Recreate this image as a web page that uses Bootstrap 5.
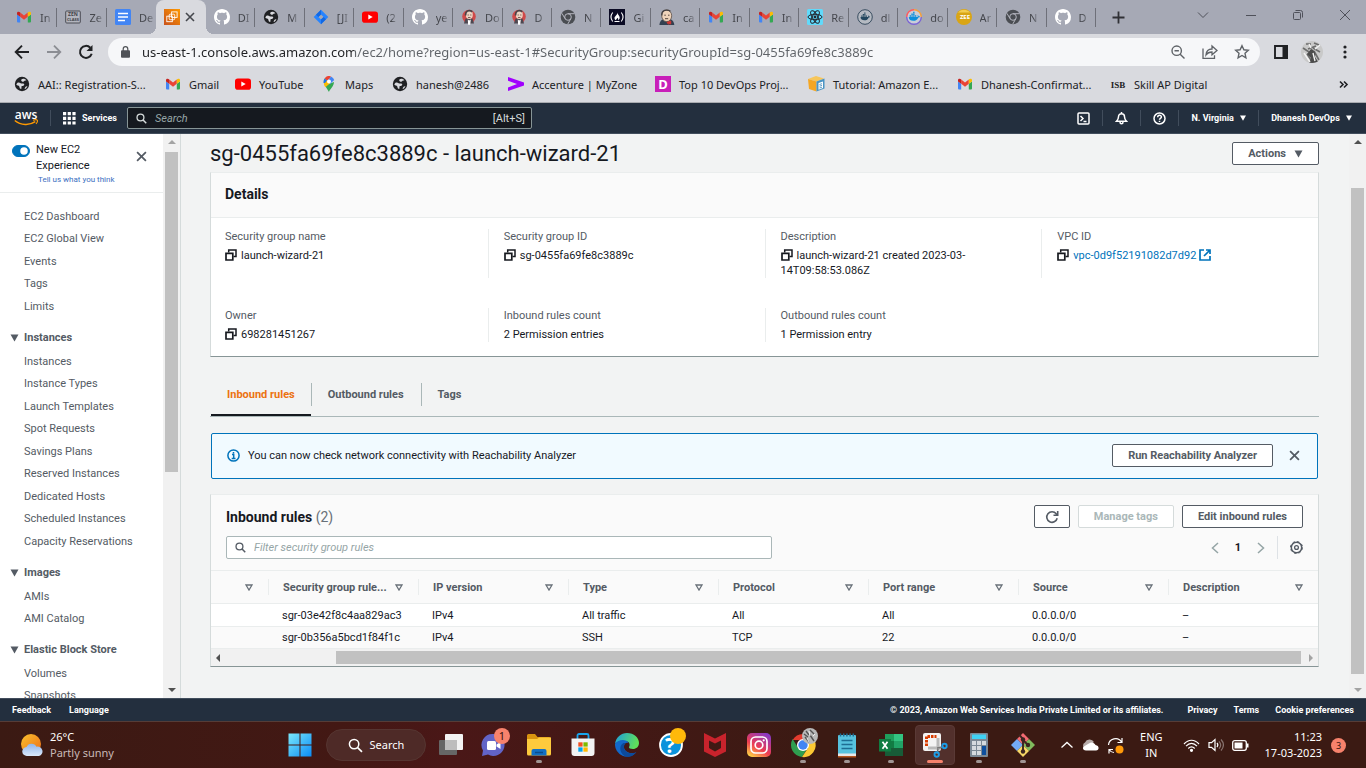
<!DOCTYPE html>
<html lang="en">
<head>
<meta charset="utf-8">
<meta name="viewport" content="width=device-width, initial-scale=1">
<title>Security group - EC2 Management Console</title>
<link href="https://cdn.jsdelivr.net/npm/bootstrap@5.3.0/dist/css/bootstrap.min.css" rel="stylesheet">
<style>
:root{--ui:"Noto Sans","Open Sans",sans-serif;--ember:Roboto,"Noto Sans",sans-serif;--ink:#16191f;--grey:#545b64;--line:#eaeded;--edge:#aab7b8;--navy:#232f3e}
html,body{height:100%}
body{font-family:var(--ember);font-size:11px;line-height:15px;color:var(--ink);background:#f2f3f3;overflow:hidden}
svg{display:block;flex:none}
button{font-family:inherit}
a{text-decoration:none;color:inherit}
.plain{border:0;background:none;padding:0;color:inherit}
.workarea{min-height:0}

/* browser window */
.browser{font-family:var(--ui);background:#d9dadf;color:#202124}
.tabstrip{height:34px;background:#a6a9b5;padding-left:8px}
.tabset{flex:0 1 1088px;min-width:0}
.wtab{flex:1 1 0;min-width:0;height:34px;padding:0 0 0 8px;gap:8px;position:relative;color:#45474d;font-size:11px}
.wtab span{white-space:nowrap;-webkit-mask-image:linear-gradient(90deg,#000 55%,rgba(0,0,0,.3))}
.wtab::after{content:"";position:absolute;right:0;top:8px;height:19px;width:1px;background:#6e7079}
.wtab.on{background:#d9dadf;border-radius:8px 8px 0 0;gap:5px}
.wtab.on::after,.wtab.before-on::after{display:none}
.wtab.on::before{content:"";position:absolute;left:-8px;right:-8px;bottom:0;height:8px;background:radial-gradient(circle at 0 0,transparent 8px,#d9dadf 8px) left/8px 8px no-repeat,radial-gradient(circle at 100% 0,transparent 8px,#d9dadf 8px) right/8px 8px no-repeat}
.wctl{gap:29px;padding-right:16px;padding-bottom:5px;color:#4f515a}
.toolbar{height:36px;padding:0 14px}
.omni{height:28px;border-radius:14px;background:#f6f7f9;padding:0 10px 0 13px;margin:0 14px;color:#5f6368}
.side-panel{margin-right:13px}
.omni input{font-family:var(--ui);font-size:13px;border:0;outline:0;min-width:0;padding:0;background:linear-gradient(90deg,#202124 216px,#5f6368 216px);-webkit-background-clip:text;background-clip:text;-webkit-text-fill-color:transparent}
.marks{height:33px;padding:0 14px 4px;font-size:11px;border-bottom:1px solid #a9abb0;margin:0}
.marks ul{display:grid;grid-template-columns:151px 70px 86px 71px 116px 147px 153px 149px 153px auto;margin:0;padding:0;list-style:none;white-space:nowrap}
.marks a{display:flex;align-items:center;gap:8px}

/* console header and footer */
.aws-top{height:31px;background:var(--navy);color:#fff;font-size:9px;font-weight:700;border-bottom:1px solid #414d5c;padding:0 14px}
.aws-top .rule{width:1px;height:16px;background:#414d5c}
.aws-top .services{gap:6px;margin:0 10px 0 12px}
.aws-search{flex:0 1 405px;height:22px;background:#15191f;border:1px solid #879596;border-radius:2px;padding:0 6px 0 8px;font-weight:400;font-size:11px;color:#d5dbdb}
.aws-search input{background:none;border:0;outline:0;color:#fff;font-size:11px;font-style:italic;min-width:0;padding:0}
.aws-search input::placeholder{color:#95a5a6;opacity:1}
.aws-foot{height:23px;background:var(--navy);border-top:1px solid #414d5c;color:#fff;font-size:9px;font-weight:700;padding:0 12px}
.aws-foot .language{margin-left:18px}

/* side navigation */
.side{flex:0 0 163px;background:#fff;overflow:hidden;color:var(--grey)}
.side-head{height:59px;border-bottom:1px solid var(--line);padding:8px 16px 0 12px;line-height:16px;color:var(--ink)}
.side-head .form-check-input{width:18px;height:12px;margin:3px 6px 0 0;float:none;background-color:#0073bb;border-color:#0073bb;flex:none;box-shadow:none}
.side-head a{font-size:8px;line-height:12px;color:#3d6fbf;padding-left:2px}
.side-head button{margin-top:9px;color:var(--grey)}
.side nav{padding-top:12px}
.side ul{list-style:none;margin:0;padding:0 0 0 24px}
.side li{height:22px;line-height:22px;white-space:nowrap}
.side li:nth-child(odd){height:23px;line-height:23px}
.side h3{font-size:11px;line-height:16px;font-weight:700;margin:12px 0 4px;padding-left:10px;gap:5px;display:flex;align-items:center}

/* drawn scroll bars */
.vbar{flex:0 0 17px;background:#f1f1f1;padding:6px 2px;align-items:center}
.vbar i,.hbar i{background:#c1c1c1}
.side-thumb{height:58%}
.page-thumb{height:88%;margin-top:44px}
.hbar{height:17px;background:#f1f1f1;padding:0 5px}
.hbar i{width:88%;height:13px}
.up,.down{width:0;height:0;border:4px solid transparent;border-top:0;border-bottom:4px solid #505050}
.down{border-bottom:0;border-top:4px solid #505050}
.lt,.rt{width:0;height:0;border:4px solid transparent;border-left:0;border-right:4px solid #505050}
.rt{border-right:0;border-left:4px solid #a3a3a3}
.dim.up{border-bottom-color:#a3a3a3}.dim.down{border-top-color:#a3a3a3}

/* main pane */
.pane{border-left:1px solid #d5dbdb;padding:8px 30px 0 29px;min-width:0;overflow:hidden}
.page-head{margin-bottom:7px}
.page-title{font-size:22px;line-height:23px;font-weight:400;margin:0}
.abtn{height:23px;border:1px solid #545b64;border-radius:2px;background:#fff;color:var(--grey);font-size:11px;line-height:15px;font-weight:700;padding:0 15px;display:inline-flex;align-items:center;justify-content:center}
.abtn:disabled{opacity:1;color:#aab7b8;border-color:#d5dbdb;background:#fff}
.abtn.square{width:36px;padding:0}
.panel{background:#fff;border:1px solid #d5dbdb;border-top-color:var(--line);border-bottom-color:#879596}
.panel-top{background:#fafafa;border-bottom:1px solid var(--line)}
.panel-top.title-only{height:45px;padding:0 14px 2px}
.panel-top.tools{padding:10px 15px 11px}
.panel h2{font-size:14px;line-height:18px;font-weight:700;margin:0}
.panel h2 span{color:#687078}
.facts{padding:11px 0 14px}
.facts dl + dl{margin-top:30px}
.kv{padding:0 15px 0 14px;color:var(--ink)}
.kv + .kv{border-left:1px solid var(--line);padding-left:15px}
.kv dt{font-weight:400;color:var(--grey);margin-bottom:4px}
.kv dd{margin:0}
.kv svg{display:inline-block;vertical-align:-2px;margin-right:4px}
.vpc{color:#0073bb}
.rtabs{height:44px;margin-top:16px;border-bottom:1px solid var(--edge);padding-left:1px}
.rtabs button{height:43px;font-weight:700;color:var(--grey);padding:0 16px;position:relative}
.rtabs button + button{padding:0 17px}
.rtabs button + button::before{content:"";position:absolute;left:0;top:10px;height:23px;width:1px;background:var(--edge)}
.rtabs .on{color:#ec7211;border-bottom:2px solid var(--ink);padding-top:2px}
.notice{height:46px;margin:16px 1px 15px;border:1px solid #0073bb;border-radius:2px;background:#f1faff;padding:0 17px 2px 15px}
.notice .plain{color:var(--grey)}
.filter{flex:0 1 546px;height:23px;background:#fff;border:1px solid var(--edge);border-radius:2px;padding:0 8px;color:var(--grey)}
.filter input{border:0;outline:0;padding:0;font-size:11px;font-style:italic;background:none;min-width:0}
.filter input::placeholder{color:#95a5a6;opacity:1}
.prefs{height:23px;padding-left:12px}
.rules{width:100%;table-layout:fixed;margin:0;border-collapse:separate;border-spacing:0}
.rules th{height:33px;background:#fafafa;border-bottom:1px solid var(--line);padding:0 15px 0 0;color:var(--grey);font-weight:700}
.rules th > div{height:16px;padding-left:14px;border-left:1px solid var(--line)}
.rules th:first-child > div{border:0}
.rules th:first-child{width:57px}
.rules td{height:23px;padding:0 0 0 14px;border-bottom:1px solid var(--line)}
.rules tr:last-child td{height:22px;background:#fafafa}

/* desktop task bar */
.taskbar{height:47px;font-family:var(--ui);background:linear-gradient(90deg,#3b1a13,#431814 25%,#4a1717 33%,#3b1a13 60%,#3b1a13);color:#fff;font-size:11px;line-height:16px;border-top:1px solid #563c37}
.weather{flex:0 0 278px;padding-left:20px;gap:7px}
.weather span{color:#c9bab7}
.tbi{width:44px;height:46px;display:flex;align-items:center;justify-content:center;position:relative}
.tbi.run::after{content:"";position:absolute;bottom:5px;left:19px;width:6px;height:3px;border-radius:2px;background:#a09593}
.tbi.cur::before{content:"";position:absolute;inset:3px 2px;border:1px solid #5a3a36;border-radius:4px;background:#52302c}
.tbi.cur svg{position:relative}
.tbi.cur::after{left:14px;width:16px;background:#f7826c}
.pill{width:100px;height:32px;border-radius:16px;background:#4e2a27;border:1px solid #563531;gap:7px;font-size:11px;margin:0 3px 0 4px}
.tray{padding-right:20px}
.clock{margin-right:9px}
.num3{width:15px;height:15px;border-radius:8px;background:#f7826c;color:#33110c;font-size:9px;line-height:15px;text-align:center}
</style>
</head>
<body class="d-flex flex-column">

<svg width="0" height="0" class="position-absolute" aria-hidden="true">
  <symbol id="gmail" viewBox="0 0 16 16"><path fill="#4285f4" d="M2 13.500h2.200V7.800L1 5.400v7.100a1 1 0 0 0 1 1z"/><path fill="#34a853" d="M11.800 13.500H14a1 1 0 0 0 1-1V5.400l-3.200 2.400z"/><path fill="#ea4335" d="M4.200 7.800V3.600L8 6.500l3.800-2.900v4.200L8 10.700z"/><path fill="#c5221f" d="M1 4.200v1.200l3.200 2.400V3.600l-.7-.5A1.500 1.500 0 0 0 1 4.200z"/><path fill="#fbbc04" d="M11.800 3.600v4.200L15 5.400V4.200a1.500 1.500 0 0 0-2.500-1.100z"/></symbol>
  <symbol id="github" viewBox="0 0 16 16"><path fill="#fff" d="M8 0C3.580 0 0 3.580 0 8c0 3.540 2.290 6.530 5.470 7.590.4.070.55-.17.55-.38 0-.19-.01-.82-.01-1.490-2.010.37-2.530-.49-2.690-.94-.09-.23-.48-.94-.82-1.130-.28-.15-.68-.52-.01-.53.63-.01 1.080.58 1.230.82.72 1.210 1.870.87 2.330.66.070-.52.28-.87.51-1.070-1.780-.2-3.640-.89-3.640-3.950 0-.87.31-1.590.82-2.150-.08-.2-.36-1.020.08-2.120 0 0 .67-.21 2.200.82.64-.18 1.320-.27 2-.27s1.360.09 2 .27c1.530-1.040 2.200-.82 2.200-.82.44 1.100.16 1.920.08 2.120.51.56.82 1.270.82 2.150 0 3.070-1.870 3.750-3.650 3.950.29.25.54.73.54 1.480 0 1.070-.01 1.930-.01 2.200 0 .21.15.46.55.38A8.010 8.010 0 0 0 16 8c0-4.420-3.580-8-8-8z"/></symbol>
  <symbol id="globe" viewBox="0 0 16 16"><circle cx="8" cy="8" r="7.200" fill="#202124"/><path fill="#d9dadf" d="M2.300 8.600C3 5.800 5.500 6.200 6.600 7.200c.8.700 2.400.2 3.100.5.900.400.7 1.700-.3 2-.9.300-1.900.2-2 1.100-.1 1 .6 1.600-.4 2.200-1.700-.4-1.300-2-1.700-2.600-.6-1-2.100-.6-3-1.800zM7.200 3.700C8.400 2.200 11 2.600 12.400 4.200c-.8.500-1.700 0-2.100.8-.3.700-1 1-1.800.7-.6-.3-1.600-1.100-1.300-2zM11.200 11.200c.5-.8 1.400-.9 2.200-.8-.5 1.200-1.500 2.200-2.700 2.700-.2-.7.100-1.300.5-1.900z"/></symbol>
  <symbol id="youtube" viewBox="0 0 16 16"><rect y="2.500" width="16" height="11.200" rx="2.800" fill="#f00"/><path fill="#fff" d="M6.300 5.600v4.900L10.700 8z"/></symbol>
  <symbol id="chromegrey" viewBox="0 0 16 16"><circle cx="8" cy="8" r="7.300" fill="#4a4d52"/><circle cx="8" cy="8" r="3.300" fill="none" stroke="#b4b6bf" stroke-width="1"/><path stroke="#b4b6bf" fill="none" d="M8 4.700h6.500M5.100 9.700 1.900 4.300M10.800 9.700l-3.100 5.500"/></symbol>
  <symbol id="jenkins" viewBox="0 0 16 16"><circle cx="8" cy="7.500" r="6.800" fill="#cf4a4a"/><path d="M4.500 9.500 3 14.500h10l-1.500-5z" fill="#4d4750"/><ellipse cx="8.300" cy="5.700" rx="3.500" ry="4.400" fill="#ecd3c2"/><path d="M4.700 6.500C4 2.200 8 .3 11.300 2.800" stroke="#4a4146" stroke-width="1.700" fill="none"/><path d="M6.600 6h1.200M9.200 6h1.200M7 8.500h2.500" stroke="#6d5049" stroke-width=".9"/><path d="m6.800 10.500 1.300 1 1.700-1-.6 5.300H7.100z" fill="#fff"/></symbol>
  <symbol id="whale" viewBox="0 0 16 16"><path d="M2 8h10.200c.3-.8.100-1.600-.4-2.200.9.200 1.500.8 1.700 1.500.5-.1 1 0 1.400.3-.4.700-1.100 1-2 .9-1 2.700-2.900 3.900-5.700 3.900C4.200 12.400 2.100 11 2 8zM3 6h1.600v1.600H3zM5 6h1.600v1.600H5zM7 6h1.600v1.600H7zM9 6h1.600v1.600H9zM5 4h1.600v1.600H5zM7 4h1.600v1.600H7zM7 2.100h1.600v1.600H7z"/></symbol>
  <symbol id="glass" viewBox="0 0 16 16"><circle cx="6.500" cy="6.500" r="5" fill="none" stroke="currentColor" stroke-width="1.900"/><path d="m10.300 10.300 4.600 4.600" stroke="currentColor" stroke-width="2.200"/></symbol>
  <symbol id="copy" viewBox="0 0 12 12"><path d="M3.700 3.500v-2.500h7.300v6.500H8.500" fill="none" stroke="#16191f" stroke-width="1.500"/><path d="M1 4.300h6.800v6.700H1z" fill="#fff" stroke="#16191f" stroke-width="1.700"/></symbol>
  <symbol id="tri" viewBox="0 0 8 8"><path d="M0 .5h8L4 7.500z" fill="currentColor"/></symbol>
  <symbol id="sort" viewBox="0 0 8 7"><path d="M1 1h6L4 6z" fill="none" stroke="#687078" stroke-width="1.300"/></symbol>
  <symbol id="cross" viewBox="0 0 10 10"><path d="m1 1 8 8M9 1 1 9" stroke="currentColor" stroke-width="1.600"/></symbol>
</svg>

<header class="browser flex-shrink-0">
  <div class="tabstrip d-flex">
    <div class="tabset d-flex">
      <div class="wtab d-flex align-items-center"><svg width="16" height="16"><use href="#gmail"/></svg><span>In</span></div>
      <div class="wtab d-flex align-items-center"><svg width="16" height="16" viewBox="0 0 16 16"><rect x=".7" y="2" width="14.600" height="12" rx="1" fill="#b3b5be" stroke="#4b4d55"/><text x="8" y="7.300" font-size="5" font-weight="700" text-anchor="middle" fill="#3f4148">ZEN</text><text x="8" y="12" font-size="4" font-weight="700" text-anchor="middle" fill="#3f4148">CLASS</text></svg><span>Ze</span></div>
      <div class="wtab before-on d-flex align-items-center"><svg width="16" height="16" viewBox="0 0 16 16"><rect width="16" height="16" rx="1.500" fill="#4285f4"/><path d="M3 4.500h10M3 8h10M3 11.500h7" stroke="#fff" stroke-width="1.600"/></svg><span>De</span></div>
      <div class="wtab on d-flex align-items-center"><svg width="16" height="16" viewBox="0 0 16 16"><defs><linearGradient id="ec" x1="0" y1="1" x2="1" y2="0"><stop stop-color="#c8511b"/><stop offset="1" stop-color="#f90"/></linearGradient></defs><rect width="16" height="16" fill="url(#ec)"/><g fill="none" stroke="#fff" stroke-width=".9"><rect x="2.800" y="7.200" width="5.500" height="5.500"/><rect x="5.200" y="5.200" width="5.500" height="5.500" rx="1"/><rect x="7.600" y="2.900" width="5.500" height="5.500"/></g></svg><button class="plain" aria-label="Close tab"><svg width="10" height="10"><use href="#cross"/></svg></button></div>
      <div class="wtab d-flex align-items-center"><svg width="16" height="16"><use href="#github"/></svg><span>DI</span></div>
      <div class="wtab d-flex align-items-center"><svg width="16" height="16"><use href="#globe"/></svg><span>M</span></div>
      <div class="wtab d-flex align-items-center"><svg width="16" height="16" viewBox="0 0 16 16"><path d="m8 .7 7.300 7.300L8 15.300.7 8z" fill="#2684ff"/><path d="m8 5.400 2.600 2.600L8 10.600 5.400 8z" fill="#a6a9b5"/><path d="M8 .7v4.700L5.400 8 3 5.700zM8 15.300v-4.700L10.600 8l2.400 2.300z" fill="#1268e3"/></svg><span>[JI</span></div>
      <div class="wtab d-flex align-items-center"><svg width="16" height="16"><use href="#youtube"/></svg><span>(2</span></div>
      <div class="wtab d-flex align-items-center"><svg width="16" height="16"><use href="#github"/></svg><span>ye</span></div>
      <div class="wtab d-flex align-items-center"><svg width="16" height="16"><use href="#jenkins"/></svg><span>Do</span></div>
      <div class="wtab d-flex align-items-center"><svg width="16" height="16"><use href="#jenkins"/></svg><span>D</span></div>
      <div class="wtab d-flex align-items-center"><svg width="16" height="16"><use href="#chromegrey"/></svg><span>N</span></div>
      <div class="wtab d-flex align-items-center"><svg width="16" height="16" viewBox="0 0 16 16"><rect width="16" height="16" fill="#0a0a23"/><g fill="none" stroke="#fff" stroke-width="1.100"><path d="M3.700 3.500c-2 2.600-2 6.400 0 9M12.300 3.500c2 2.600 2 6.400 0 9M5.500 12.500h5"/></g><path fill="#fff" d="M8.300 3.400c.4 2.500 3 3.500 2.300 6-.2.900-.9 1.500-1.600 1.800.5-1 .1-1.800-.5-2.400-.5 1-1.600 1.200-1.300 2.400-1-.4-1.700-1.200-1.700-2.300C5.500 7 8.500 6.200 8.300 3.400z"/></svg><span>Gi</span></div>
      <div class="wtab d-flex align-items-center"><svg width="16" height="16" viewBox="0 0 16 16"><path d="M4 10.500c-2 .5-3.300 2-3.600 5.500h14.900c-.2-2.500-1.300-4.500-3-5.500z" fill="#334050"/><ellipse cx="7.700" cy="6.800" rx="5" ry="5.800" fill="#efd3ba" stroke="#5d5148" stroke-width=".8"/><path d="M2.900 6.500C2 1 8 0 11.500 2.200" stroke="#454041" stroke-width="1.300" fill="none"/><path d="m8 13.500 3.700-1.500v3zM8 13.500l2 2.200" fill="#d33833" stroke="#d33833" stroke-width="1"/><path d="M5.300 6.200h1.500M9 6.200h1.500M6 9.700h3.200" stroke="#453630" stroke-width=".9"/></svg><span>ca</span></div>
      <div class="wtab d-flex align-items-center"><svg width="16" height="16"><use href="#gmail"/></svg><span>In</span></div>
      <div class="wtab d-flex align-items-center"><svg width="16" height="16"><use href="#gmail"/></svg><span>In</span></div>
      <div class="wtab d-flex align-items-center"><svg width="16" height="16" viewBox="0 0 16 16"><rect width="16" height="16" rx="1.500" fill="#61dafb"/><g fill="none" stroke="#23272f"><ellipse cx="8" cy="8" rx="7" ry="2.700"/><ellipse cx="8" cy="8" rx="7" ry="2.700" transform="rotate(60 8 8)"/><ellipse cx="8" cy="8" rx="7" ry="2.700" transform="rotate(120 8 8)"/></g><circle cx="8" cy="8" r="1.400" fill="#23272f"/></svg><span>Re</span></div>
      <div class="wtab d-flex align-items-center"><svg width="16" height="16" viewBox="0 0 16 16"><circle cx="8" cy="8" r="7.300" fill="#b5bac2" stroke="#394d60"/><use href="#whale" x="2" y="2" width="12" height="12" fill="#23475f"/></svg><span>dl</span></div>
      <div class="wtab d-flex align-items-center"><svg width="16" height="16" viewBox="0 0 16 16"><circle cx="8" cy="8" r="7.300" fill="#c9ced8"/><path d="M8 .7A7.300 7.300 0 0 0 .7 8" stroke="#ff5a5f" stroke-width="1.400" fill="none"/><path d="M8 .7A7.300 7.300 0 0 1 15.300 8" stroke="#f5a03c" stroke-width="1.400" fill="none"/><path d="M.7 8a7.300 7.300 0 0 0 14.600 0" stroke="#7a63d4" stroke-width="1.400" fill="none"/><use href="#whale" x="1" y="1" width="14" height="14" fill="#0b8fdc"/></svg><span>do</span></div>
      <div class="wtab d-flex align-items-center"><svg width="16" height="16" viewBox="0 0 16 16"><circle cx="8" cy="8" r="8" fill="#d9a514"/><path d="M2 3.500c4-4 9-3 12 0" fill="#f2cd51"/><text x="9" y="10.300" font-size="6" font-weight="700" text-anchor="middle" fill="#fff">ZEE</text></svg><span>Ar</span></div>
      <div class="wtab d-flex align-items-center"><svg width="16" height="16"><use href="#chromegrey"/></svg><span>N</span></div>
      <div class="wtab d-flex align-items-center"><svg width="16" height="16"><use href="#github"/></svg><span>D</span></div>
    </div>
    <button class="plain px-3" aria-label="New tab"><svg width="13" height="13" viewBox="0 0 13 13"><path d="M6.500.5v12M.5 6.500h12" stroke="#303136" stroke-width="1.800"/></svg></button>
    <div class="wctl d-flex align-items-center ms-auto">
      <button class="plain px-1" aria-label="Search tabs"><svg width="12" height="12" viewBox="0 0 12 12" fill="none" stroke="currentColor"><path d="m1 3.500 5 5 5-5"/></svg></button>
      <button class="plain px-1" aria-label="Minimise"><svg width="10" height="10" viewBox="0 0 10 10"><path d="M0 5.500h10" stroke="currentColor"/></svg></button>
      <button class="plain px-1" aria-label="Restore"><svg width="10" height="10" viewBox="0 0 10 10" fill="none" stroke="currentColor"><rect x=".5" y="2.500" width="7" height="7" rx="1"/><path d="M2.500.5h5a2 2 0 0 1 2 2v5"/></svg></button>
      <button class="plain ps-1" aria-label="Close window"><svg width="10" height="10" viewBox="0 0 10 10"><path d="m0 0 10 10M10 0 0 10" stroke="currentColor"/></svg></button>
    </div>
  </div>
  <div class="toolbar d-flex align-items-center">
    <button class="plain me-3" aria-label="Back"><svg width="16" height="16" viewBox="0 0 16 16" fill="none" stroke="#202124" stroke-width="1.900"><path d="M15 8H2.500M8 1.700 1.700 8 8 14.300"/></svg></button>
    <button class="plain me-3" aria-label="Forward"><svg width="16" height="16" viewBox="0 0 16 16" fill="none" stroke="#8b8d93" stroke-width="1.800"><path d="M1 8h12.500M8 1.700 14.300 8 8 14.300"/></svg></button>
    <button class="plain" aria-label="Reload"><svg width="16" height="16" viewBox="0 0 16 16"><path d="M13.700 9.700A6 6 0 1 1 12.300 3.700" fill="none" stroke="#202124" stroke-width="2"/><path d="M14.500 1v6h-6z" fill="#202124"/></svg></button>
    <div class="omni d-flex align-items-center flex-grow-1">
      <svg width="9" height="12" viewBox="0 0 9 12"><rect y="4.300" width="9" height="7.500" rx="1" fill="#4f5257"/><path d="M2.200 5V3a2.300 2.300 0 0 1 4.600 0v2" fill="none" stroke="#4f5257" stroke-width="1.200"/></svg>
      <input class="flex-grow-1 mx-2 ps-1" type="text" aria-label="Address" value="us-east-1.console.aws.amazon.com/ec2/home?region=us-east-1#SecurityGroup:securityGroupId=sg-0455fa69fe8c3889c">
      <button class="plain me-3" aria-label="Zoom"><svg width="16" height="16" viewBox="0 0 16 16" fill="none" stroke="currentColor" stroke-width="1.400"><circle cx="6.700" cy="6.700" r="4.700"/><path d="m10.200 10.200 4.300 4.300M4.500 6.700h4.400"/></svg></button>
      <button class="plain me-3" aria-label="Share"><svg width="16" height="16" viewBox="0 0 16 16" fill="none" stroke="currentColor" stroke-width="1.300"><path d="M1 4.500v9.800h11.500v-3"/><path d="M4 11c.3-4 2.500-6 6-6V2l5 4.500-5 4.300V8C7.500 8 5.500 8.800 4 11z"/></svg></button>
      <button class="plain" aria-label="Bookmark"><svg width="16" height="16" viewBox="0 0 16 16" fill="none" stroke="currentColor" stroke-width="1.400"><path d="m8 1.700 1.900 4.100 4.400.5-3.300 3 .9 4.500L8 11.500l-3.900 2.300.9-4.500-3.300-3 4.400-.5z"/></svg></button>
    </div>
    <button class="plain side-panel" aria-label="Side panel"><svg width="14" height="14" viewBox="0 0 14 14"><path d="M1 1h12v12H1z" fill="none" stroke="#202124" stroke-width="1.900"/><path d="M8.500 0H14v14H8.500z" fill="#202124"/></svg></button>
    <button class="plain" aria-label="Profile"><svg width="22" height="22" viewBox="0 0 22 22"><defs><clipPath id="av"><circle cx="11" cy="11" r="11"/></clipPath></defs><g clip-path="url(#av)"><path fill="#c9c9c9" d="M0 0h22v22H0z"/><path d="M5 3h5M13 2l5 2M2 7l6 4M7 8l8-3M12 7l7 4M6 13l4 6M13 10l5 9" stroke="#6d6d6d" stroke-width="1.600"/><path d="M10 8c4 1 5 5 4 8l4 6H8l2-5-4-4z" fill="#4c4c4c"/><path d="m3 12 6 9M12 12l2 8M8 3l2 4M14 8l5-4" stroke="#f3f3f3" stroke-width="1.400"/></g></svg></button>
    <button class="plain ps-3" aria-label="Menu"><svg width="13" height="14" viewBox="0 0 13 14" fill="#202124"><circle cx="6" cy="2" r="1.600"/><circle cx="6" cy="7" r="1.600"/><circle cx="6" cy="12" r="1.600"/></svg></button>
  </div>
  <nav class="marks d-flex align-items-center" aria-label="Bookmarks">
    <ul>
      <li><a href="#"><svg width="16" height="16"><use href="#globe"/></svg>AAI:: Registration-S...</a></li>
      <li><a href="#"><svg width="16" height="16"><use href="#gmail"/></svg>Gmail</a></li>
      <li><a href="#"><svg width="16" height="16"><use href="#youtube"/></svg>YouTube</a></li>
      <li><a href="#"><svg width="16" height="16" viewBox="0 0 16 16"><path fill="#34a853" d="M3.300 8.500 8 16c.4-2.500 5-5.600 5-10L8 8z"/><path fill="#4285f4" d="M10 .4A5.500 5.500 0 0 1 13.200 4L8.800 8.200 7 4z"/><path fill="#ea4335" d="M3.600 2.400A5.400 5.400 0 0 1 10 .4L6.200 5z"/><path fill="#fbbc04" d="M3.600 2.400 6.600 5 9 7.300l-4.600 4C3 9.300 2 5 3.600 2.400z"/><path fill="#1a73e8" d="M3.600 2.400 6 4.500 4 7H2.500c0-2 .2-3.400 1.100-4.600z"/><circle cx="8" cy="5.600" r="2" fill="#fff"/></svg>Maps</a></li>
      <li><a href="#"><svg width="16" height="16"><use href="#globe"/></svg>hanesh@2486</a></li>
      <li><a href="#"><svg width="16" height="16" viewBox="0 0 16 16"><path d="M0 1v3.700L9 8l-9 3.500V15l16-5.600V6.600z" fill="#a100ff"/></svg>Accenture | MyZone</a></li>
      <li><a href="#"><svg width="16" height="16" viewBox="0 0 16 16"><rect width="16" height="16" fill="#c81fb9"/><text x="8" y="12.600" font-size="13" font-weight="700" text-anchor="middle" fill="#fff">D</text></svg>Top 10 DevOps Proj...</a></li>
      <li><a href="#"><svg width="17" height="16" viewBox="0 0 17 16"><path d="M0 3 8 0l8 2.500-7.500 3z" fill="#f7c65a"/><path d="M0 3l8.500 2.500v10L1 13z" fill="#f5a623"/><path d="m8.500 5.500 8-3v10l-8 3z" fill="#4a94c4"/><path d="M10.500 7 15 5.500v6.500l-4.500 1.700z" fill="#fff"/><path d="m11.500 8.500 2.500-.8m-2.500 2.500 2.500-.8m-2.500 2.600 2.500-.8" stroke="#3b86b8" stroke-width=".8"/></svg>Tutorial: Amazon E...</a></li>
      <li><a href="#"><svg width="16" height="16"><use href="#gmail"/></svg>Dhanesh-Confirmat...</a></li>
      <li><a href="#"><svg width="16" height="16" viewBox="0 0 16 16"><text x="8" y="12" font-family="Liberation Serif" font-size="9" font-weight="700" text-anchor="middle" fill="#222">ISB</text></svg>Skill AP Digital</a></li>
    </ul>
    <button class="plain ms-auto" aria-label="More bookmarks"><svg width="18" height="9" viewBox="0 0 18 9" fill="none" stroke="#202124" stroke-width="1.600"><path d="m6 1.500 3 3-3 3M10 1.500l3 3-3 3"/></svg></button>
  </nav>
</header>

<div class="aws-top d-flex align-items-center flex-shrink-0">
  <a href="#" class="me-2 pe-1" aria-label="AWS home"><svg width="24" height="18" viewBox="0 0 24 18"><text x="12" y="9.500" font-family="Open Sans" font-size="12" font-weight="600" text-anchor="middle" fill="#fff">aws</text><path d="M.8 11.500c6 5 15 5 20.500 1.200" fill="none" stroke="#f90" stroke-width="1.500"/><path d="M19 11.200c2-.6 4-.5 4.300 0 .3.600-.2 2.500-1.300 3.700" fill="none" stroke="#f90" stroke-width="1.100"/></svg></a>
  <span class="rule"></span>
  <button class="plain services d-flex align-items-center fw-bold text-nowrap"><svg width="13" height="13" viewBox="0 0 13 13" fill="#fff"><path d="M0 0h3.200v3.200H0zM4.700 0h3.200v3.200H4.700zM9.400 0h3.200v3.200H9.400zM0 4.700h3.200v3.200H0zM4.700 4.700h3.200v3.200H4.700zM9.400 4.700h3.200v3.200H9.400zM0 9.400h3.200v3.200H0zM4.700 9.400h3.200v3.200H4.700zM9.400 9.400h3.200v3.200H9.400z"/></svg>Services</button>
  <div class="aws-search d-flex align-items-center gap-2"><svg width="11" height="11"><use href="#glass"/></svg><input class="flex-grow-1" type="search" placeholder="Search" aria-label="Search services"><span>[Alt+S]</span></div>
  <div class="d-flex align-items-center ms-auto gap-2 text-nowrap">
    <button class="plain px-1" aria-label="CloudShell"><svg width="13" height="13" viewBox="0 0 13 13" fill="none" stroke="#fff" stroke-width="1.500"><rect x="1" y="1" width="11" height="11" rx="1"/><path d="M3.500 4 6 6.500 3.500 9M6.500 9.500h3"/></svg></button>
    <span class="rule"></span>
    <button class="plain px-1" aria-label="Notifications"><svg width="13" height="13" viewBox="0 0 12 13" fill="none" stroke="#fff" stroke-width="1.500"><path d="M1 9.200c1.500-1.500 2-2.500 2-4.500a3 3 0 0 1 6 0c0 2 .5 3 2 4.500zM6 0v2M4.500 10c0 2.400 3 2.400 3 0"/></svg></button>
    <span class="rule"></span>
    <button class="plain px-1" aria-label="Help"><svg width="13" height="13" viewBox="0 0 13 13" fill="none" stroke="#fff" stroke-width="1.500"><circle cx="6.500" cy="6.500" r="5.500"/><path d="M4.700 5.200c0-2.500 3.700-2.400 3.700-.2 0 1.400-1.900 1.300-1.900 2.700M6.500 8.700v1.400"/></svg></button>
    <span class="rule"></span>
    <button class="plain px-1 fw-bold">N. Virginia <svg class="d-inline ms-1" width="6" height="6"><use href="#tri"/></svg></button>
    <span class="rule"></span>
    <button class="plain ps-1 fw-bold">Dhanesh DevOps <svg class="d-inline ms-1" width="6" height="6"><use href="#tri"/></svg></button>
  </div>
</div>

<div class="workarea d-flex flex-grow-1">
  <aside class="side">
    <div class="side-head d-flex">
      <div class="form-switch d-flex p-0 flex-grow-1">
        <input class="form-check-input" type="checkbox" role="switch" id="newux" checked>
        <div><label for="newux" class="d-block">New EC2<br>Experience</label><a href="#" class="d-block text-nowrap">Tell us what you think</a></div>
      </div>
      <button class="plain align-self-start" aria-label="Close navigation"><svg width="11" height="11"><use href="#cross"/></svg></button>
    </div>
    <nav>
      <ul><li><a href="#">EC2 Dashboard</a></li><li><a href="#">EC2 Global View</a></li><li><a href="#">Events</a></li><li><a href="#">Tags</a></li><li><a href="#">Limits</a></li></ul>
      <h3><svg width="9" height="8"><use href="#tri"/></svg>Instances</h3>
      <ul><li><a href="#">Instances</a></li><li><a href="#">Instance Types</a></li><li><a href="#">Launch Templates</a></li><li><a href="#">Spot Requests</a></li><li><a href="#">Savings Plans</a></li><li><a href="#">Reserved Instances</a></li><li><a href="#">Dedicated Hosts</a></li><li><a href="#">Scheduled Instances</a></li><li><a href="#">Capacity Reservations</a></li></ul>
      <h3><svg width="9" height="8"><use href="#tri"/></svg>Images</h3>
      <ul><li><a href="#">AMIs</a></li><li><a href="#">AMI Catalog</a></li></ul>
      <h3><svg width="9" height="8"><use href="#tri"/></svg>Elastic Block Store</h3>
      <ul><li><a href="#">Volumes</a></li><li><a href="#">Snapshots</a></li></ul>
    </nav>
  </aside>
  <div class="vbar d-flex flex-column" aria-hidden="true"><b class="up dim"></b><i class="side-thumb w-100 mt-2"></i><b class="down mt-auto"></b></div>

  <main class="pane flex-grow-1">
    <div class="page-head d-flex justify-content-between align-items-center">
      <h1 class="page-title">sg-0455fa69fe8c3889c - launch-wizard-21</h1>
      <button class="abtn gap-2">Actions<svg width="9" height="8"><use href="#tri"/></svg></button>
    </div>
    <section class="panel">
      <div class="panel-top title-only d-flex align-items-center"><h2>Details</h2></div>
      <div class="facts">
        <dl class="row g-0 mb-0">
          <div class="col-3 kv"><dt>Security group name</dt><dd><svg width="12" height="12"><use href="#copy"/></svg>launch-wizard-21</dd></div>
          <div class="col-3 kv"><dt>Security group ID</dt><dd><svg width="12" height="12"><use href="#copy"/></svg>sg-0455fa69fe8c3889c</dd></div>
          <div class="col-3 kv"><dt>Description</dt><dd><svg width="12" height="12"><use href="#copy"/></svg>launch-wizard-21 created 2023-03-<br>14T09:58:53.086Z</dd></div>
          <div class="col-3 kv"><dt>VPC ID</dt><dd><svg width="12" height="12"><use href="#copy"/></svg><a href="#" class="vpc">vpc-0d9f52191082d7d92 <svg width="12" height="12" viewBox="0 0 12 12" fill="none" stroke="#0073bb" stroke-width="1.700"><path d="M5 1H1v10h10V7M7 1h4v4M11 1 5 7"/></svg></a></dd></div>
        </dl>
        <dl class="row g-0 mb-0">
          <div class="col-3 kv"><dt>Owner</dt><dd><svg width="12" height="12"><use href="#copy"/></svg>698281451267</dd></div>
          <div class="col-3 kv"><dt>Inbound rules count</dt><dd>2 Permission entries</dd></div>
          <div class="col-3 kv"><dt>Outbound rules count</dt><dd>1 Permission entry</dd></div>
        </dl>
      </div>
    </section>

    <div class="rtabs d-flex" role="tablist">
      <button class="plain on" role="tab" aria-selected="true">Inbound rules</button>
      <button class="plain" role="tab">Outbound rules</button>
      <button class="plain" role="tab">Tags</button>
    </div>

    <div class="notice d-flex align-items-center">
      <svg width="13" height="13" viewBox="0 0 13 13" fill="none" stroke="#0073bb" stroke-width="1.500"><circle cx="6.500" cy="6.500" r="5.600"/><path d="M5 5.500h1.700v4M4.700 9.500h3.800M6.500 3v1.500"/></svg>
      <span class="ms-2">You can now check network connectivity with Reachability Analyzer</span>
      <button class="abtn ms-auto">Run Reachability Analyzer</button>
      <button class="plain ms-3" aria-label="Dismiss"><svg width="11" height="11"><use href="#cross"/></svg></button>
    </div>

    <section class="panel">
      <div class="panel-top tools">
        <div class="d-flex align-items-center gap-2 mb-2">
          <h2 class="me-auto">Inbound rules <span class="fw-normal">(2)</span></h2>
          <button class="abtn square" aria-label="Refresh"><svg width="14" height="14" viewBox="0 0 14 14" fill="none" stroke="#545b64" stroke-width="1.600"><path d="M12.200 8.300a5.300 5.300 0 1 1-1-4.600L12.500 5M12.700 1v4.300H8.500"/></svg></button>
          <button class="abtn" disabled>Manage tags</button>
          <button class="abtn">Edit inbound rules</button>
        </div>
        <div class="d-flex align-items-center justify-content-between">
          <div class="filter d-flex align-items-center"><svg width="11" height="11" class="me-2"><use href="#glass"/></svg><input class="flex-grow-1" type="text" placeholder="Filter security group rules" aria-label="Filter security group rules"></div>
          <div class="d-flex align-items-center">
            <button class="plain me-3" aria-label="Previous page"><svg width="8" height="12" viewBox="0 0 8 12" fill="none" stroke="#95a5a6" stroke-width="1.500"><path d="M7 1 1.500 6 7 11"/></svg></button>
            <span class="fw-bold">1</span>
            <button class="plain ms-3 me-2" aria-label="Next page"><svg width="8" height="12" viewBox="0 0 8 12" fill="none" stroke="#95a5a6" stroke-width="1.500"><path d="m1 1 5.500 5L1 11"/></svg></button>
            <button class="plain prefs border-start ms-1" aria-label="Settings"><svg width="13" height="13" viewBox="0 0 13 13" fill="none" stroke="#545b64"><circle cx="6.500" cy="6.500" r="5.200" stroke-width="1.500"/><circle cx="6.500" cy="6.500" r="6" stroke-dasharray="2.350 2.350"/><circle cx="6.500" cy="6.500" r="1.900" stroke-width="1.300"/></svg></button>
          </div>
        </div>
      </div>
      <table class="rules">
        <thead><tr>
          <th><div class="d-flex align-items-center justify-content-end"><svg width="8" height="7"><use href="#sort"/></svg></div></th>
          <th><div class="d-flex align-items-center justify-content-between text-nowrap">Security group rule...<svg width="8" height="7"><use href="#sort"/></svg></div></th>
          <th><div class="d-flex align-items-center justify-content-between">IP version<svg width="8" height="7"><use href="#sort"/></svg></div></th>
          <th><div class="d-flex align-items-center justify-content-between">Type<svg width="8" height="7"><use href="#sort"/></svg></div></th>
          <th><div class="d-flex align-items-center justify-content-between">Protocol<svg width="8" height="7"><use href="#sort"/></svg></div></th>
          <th><div class="d-flex align-items-center justify-content-between">Port range<svg width="8" height="7"><use href="#sort"/></svg></div></th>
          <th><div class="d-flex align-items-center justify-content-between">Source<svg width="8" height="7"><use href="#sort"/></svg></div></th>
          <th><div class="d-flex align-items-center justify-content-between">Description<svg width="8" height="7"><use href="#sort"/></svg></div></th>
        </tr></thead>
        <tbody>
          <tr><td></td><td>sgr-03e42f8c4aa829ac3</td><td>IPv4</td><td>All traffic</td><td>All</td><td>All</td><td>0.0.0.0/0</td><td>–</td></tr>
          <tr><td></td><td>sgr-0b356a5bcd1f84f1c</td><td>IPv4</td><td>SSH</td><td>TCP</td><td>22</td><td>0.0.0.0/0</td><td>–</td></tr>
        </tbody>
      </table>
      <div class="hbar d-flex align-items-center" aria-hidden="true"><b class="lt"></b><i class="ms-auto me-2"></i><b class="rt"></b></div>
    </section>
  </main>
  <div class="vbar d-flex flex-column" aria-hidden="true"><b class="up"></b><i class="page-thumb w-100"></i><b class="down dim mt-auto"></b></div>
</div>

<footer class="aws-foot d-flex align-items-center flex-shrink-0 text-nowrap">
  <a href="#">Feedback</a><a href="#" class="language">Language</a>
  <span class="ms-auto">© 2023, Amazon Web Services India Private Limited or its affiliates.</span>
  <a href="#" class="ms-4">Privacy</a><a href="#" class="ms-3">Terms</a><a href="#" class="ms-3">Cookie preferences</a>
</footer>

<div class="taskbar d-flex align-items-center flex-shrink-0 text-nowrap">
  <div class="weather d-flex align-items-center">
    <svg width="23" height="24" viewBox="0 0 23 24"><defs><linearGradient id="sun" x2="1" y2="1"><stop stop-color="#f9c22e"/><stop offset="1" stop-color="#ee6c16"/></linearGradient><linearGradient id="cl" x2="0" y2="1"><stop stop-color="#8fb4ea"/><stop offset="1" stop-color="#dbe8fa"/></linearGradient></defs><circle cx="11" cy="11" r="10" fill="url(#sun)"/><path d="M7 23a4.500 4.500 0 0 1-.5-9 5.500 5.500 0 0 1 10-.2A4.500 4.500 0 0 1 19 23z" fill="url(#cl)"/></svg>
    <div>26°C<br><span>Partly sunny</span></div>
  </div>
  <button class="plain tbi" aria-label="Start"><svg width="24" height="24" viewBox="0 0 24 24"><defs><linearGradient id="win" x2="1" y2="1"><stop stop-color="#7be8fb"/><stop offset="1" stop-color="#0a8cf5"/></linearGradient></defs><path fill="url(#win)" d="M.5.500h11v11H.5zM12.500.500h11v11h-11zM.5 12.500h11v11H.5zM12.500 12.500h11v11h-11z"/></svg></button>
  <button class="plain pill d-flex align-items-center justify-content-center"><svg width="15" height="15" viewBox="0 0 16 16"><circle cx="6.500" cy="6.500" r="5" fill="none" stroke="#fff" stroke-width="1.600"/><path d="m10.300 10.300 4.600 4.600" stroke="#fff" stroke-width="1.800"/></svg>Search</button>
  <button class="plain tbi" aria-label="Task view"><svg width="24" height="24" viewBox="0 0 24 24"><rect y="7" width="18" height="15" rx="1" fill="#666"/><rect x="6" y="1" width="18" height="16" rx="1" fill="#f3f3f3"/><path d="M6 7h12v10H6z" fill="#bdbdbd"/></svg></button>
  <button class="plain tbi" aria-label="Chat"><svg width="30" height="36" viewBox="0 0 30 36"><path d="M13 7a11 11 0 1 1-5 20.500L2 29l1-5.500A11 11 0 0 1 13 7z" fill="#6264c7"/><rect x="7" y="14" width="9" height="9" rx="1.500" fill="#fff"/><path d="m16.500 17.500 4-2.500v7l-4-2.500z" fill="#fff"/><circle cx="22" cy="9" r="8" fill="#f7826c"/><text x="22" y="13" font-size="11" text-anchor="middle" fill="#33110c">1</text></svg></button>
  <button class="plain tbi run" aria-label="File Explorer"><svg width="24" height="22" viewBox="0 0 24 22"><path d="M0 1.500A1.500 1.500 0 0 1 1.500 0H8l2.500 3H22a2 2 0 0 1 2 2v5H0z" fill="#d9930f"/><path d="M0 5h10l2-1.500h12V20a1.500 1.500 0 0 1-1.500 1.500h-21A1.500 1.500 0 0 1 0 20z" fill="#fdca3d"/><path d="M4.500 21.500v-4.500a2 2 0 0 1 2-2h11a2 2 0 0 1 2 2v4.500z" fill="#1270c4"/><path d="M8 18.500h8" stroke="#0b4c8b" stroke-width="1.500"/></svg></button>
  <button class="plain tbi" aria-label="Store"><svg width="24" height="24" viewBox="0 0 24 24"><path d="M6.500 6V2.500A1.500 1.500 0 0 1 8 1h8a1.500 1.500 0 0 1 1.500 1.500V6" fill="none" stroke="#18a4ec" stroke-width="1.800"/><path d="M.5 5.500h23V20a3 3 0 0 1-3 3h-17a3 3 0 0 1-3-3z" fill="#f3f3f3"/><path fill="#f25022" d="M7.300 9.300h4.300v4.300H7.300z"/><path fill="#7fba00" d="M12.400 9.300h4.300v4.300h-4.300z"/><path fill="#00a4ef" d="M7.300 14.400h4.300v4.300H7.300z"/><path fill="#ffb900" d="M12.400 14.400h4.300v4.300h-4.300z"/></svg></button>
  <button class="plain tbi" aria-label="Edge"><svg width="24" height="24" viewBox="0 0 24 24"><defs><linearGradient id="eg" x2="1" y2=".3"><stop stop-color="#1b9de2"/><stop offset="1" stop-color="#5fe05a"/></linearGradient></defs><path d="M0 11C1 4 6 0 12 0c7 0 12 4.700 12 10 0 3.800-2.800 6-6 6-2.500 0-4.500-1-4-2 1.500-2 .6-6-4-6C5 8 1 10 0 11z" fill="url(#eg)"/><path d="M0 11c2.500-4.500 11.500-5.500 13.500-1C10 9 8.500 12 9 14.500c.7 4 6 7.500 12 5A12 12 0 0 1 0 11z" fill="#1268c9"/><path d="M8.300 10C3 13 5 22 12 24c4 0 7.300-2 9.500-5C15.500 22 9 19 9 14.500c0-1.500.3-3 1.500-4.500z" fill="#0c4a9b"/></svg></button>
  <button class="plain tbi" aria-label="Help"><svg width="30" height="36" viewBox="0 0 30 36"><circle cx="15" cy="18" r="11" fill="#0a93dc" stroke="#fff" stroke-width="1.800"/><text x="14" y="25.500" font-size="21" font-weight="700" text-anchor="middle" fill="#fff">?</text><circle cx="22" cy="9" r="8" fill="#ffb90a"/></svg></button>
  <button class="plain tbi" aria-label="McAfee"><svg width="22" height="24" viewBox="0 0 22 24"><path d="M0 0 11 5.500 22 0v18.500L11 24 0 18.500zM5 7.500V15l6 3.500 6-3.500V7.500L11 10.500z" fill="#c8232c"/></svg></button>
  <button class="plain tbi" aria-label="Instagram"><svg width="24" height="24" viewBox="0 0 24 24"><defs><linearGradient id="ig" x1=".2" y1="1" x2=".8" y2="0"><stop stop-color="#fed046"/><stop offset=".4" stop-color="#ef3d50"/><stop offset="1" stop-color="#8538c8"/></linearGradient></defs><rect width="24" height="24" rx="5" fill="url(#ig)"/><g fill="none" stroke="#fff" stroke-width="1.700"><rect x="4" y="4" width="16" height="16" rx="4.500"/><circle cx="12" cy="12" r="3.800"/></g><circle cx="16.700" cy="7.300" r="1.100" fill="#fff"/></svg></button>
  <button class="plain tbi run" aria-label="Chrome"><svg width="30" height="36" viewBox="0 0 30 36"><path d="M4.600 13A12 12 0 0 1 25.400 13H15z" fill="#e33b2e"/><path d="M4.600 12A12 12 0 0 0 14 30l5.500-9h-9.200z" fill="#2f9e4f"/><path d="M15 13h11.500A12 12 0 0 1 14 30l6-9z" fill="#fcc934"/><circle cx="15" cy="18" r="6" fill="#fff"/><circle cx="15" cy="18" r="4.700" fill="#4285f4"/><circle cx="22" cy="9" r="8" fill="#b9b9b9"/><path d="m18 4 3 4M22 3l4 4M17 10l4 5M22 8l4 6M16 7l4 3" stroke="#555" stroke-width="1.400"/><path d="m21 4 1 5M25 9l2-2M19 11l2 4" stroke="#eee"/></svg></button>
  <button class="plain tbi run" aria-label="Notepad"><svg width="20" height="25" viewBox="0 0 20 25"><rect x="1" y="2" width="18" height="22" rx="1" fill="#57c2de"/><path d="M1 20.500h18V23H1z" fill="#e8e8e8"/><path d="M1 23h18v1.500H1z" fill="#b5541c"/><path d="M3.500.5v3M6.700.5v3M9.900.5v3M13.100.5v3M16.300.5v3" stroke="#1d6d93" stroke-width="1.500"/><path d="M4.500 7.500h11M4.500 11.500h11M4.500 15.500h11" stroke="#1d6d93" stroke-width="1.700"/></svg></button>
  <button class="plain tbi run" aria-label="Excel"><svg width="24" height="22" viewBox="0 0 24 22"><path d="M6 0h9v22H6z" fill="#1f9e5c"/><path d="M15 0h9v7h-9z" fill="#33c481"/><path d="M6 7h9v7H6z" fill="#127b43"/><path d="M15 7h9v7h-9z" fill="#21a366"/><path d="M6 14h18v8H6z" fill="#185c37"/><path d="M0 5h12v12.500H0z" fill="#107c41"/><path d="m3.500 7.700 5 7M8.500 7.700l-5 7" stroke="#fff" stroke-width="1.700"/></svg></button>
  <button class="plain tbi run cur" aria-label="Snipping Tool"><svg width="26" height="26" viewBox="0 0 26 26"><rect x="1" y="1" width="18" height="18" rx="2" fill="#f3f3f3"/><path d="M4.500 14V4.500h10" fill="none" stroke="#d83b01" stroke-width="3" stroke-dasharray="2.500 1"/><path d="M16 6v12M6 16h13" stroke="#b9b9b9" stroke-width="3"/><path d="m15 16 7-1M16 17l-1 5" stroke="#777" stroke-width="1.500"/><g fill="none" stroke="#1b9de8" stroke-width="1.900"><circle cx="22.500" cy="14" r="2.200"/><circle cx="14.700" cy="22.500" r="2.200"/></g></svg></button>
  <button class="plain tbi run" aria-label="Calculator"><svg width="18" height="24" viewBox="0 0 18 24"><rect width="18" height="24" rx="1" fill="#7b8894"/><path d="M2 1.500h14V6H2z" fill="#3fd2f5"/><path d="M2 8h4v4H2zM7 8h4v4H7zM12 8h4v4h-4zM2 13h4v4H2zM7 13h4v4H7zM2 18h4v4H2zM7 18h4v4H7z" fill="#d5dade"/><path d="M12 13h4v9h-4z" fill="#0d4f9e"/></svg></button>
  <button class="plain tbi run" aria-label="Git"><svg width="24" height="24" viewBox="0 0 24 24"><path d="m12 0 6 6-6 6-6-6z" fill="#f26b72"/><path d="m6 6 6 6-6 6-6-6z" fill="#73a9f4"/><path d="m18 6 6 6-6 6-6-6z" fill="#80bb5d"/><path d="m12 12 6 6-6 6-6-6z" fill="#f8d866"/><path d="M8 1.500 12 6v13M12 7l5 5" stroke="#3a2520" stroke-width="1.900" fill="none"/><circle cx="12" cy="6.500" r="2.200" fill="#3a2520"/><circle cx="17" cy="12" r="2.200" fill="#3a2520"/><circle cx="12" cy="18.500" r="2.200" fill="#3a2520"/></svg></button>

  <div class="tray d-flex align-items-center ms-auto">
    <button class="plain me-2" aria-label="Hidden icons"><svg width="14" height="12" viewBox="0 0 14 12" fill="none" stroke="#fff" stroke-width="1.300"><path d="m1.500 8.500 5.500-5 5.500 5"/></svg></button>
    <svg class="me-2" width="17" height="12" viewBox="0 0 17 12"><path d="M3.500 10A3.500 3.500 0 0 1 3 3.500a5 5 0 0 1 9-.5z" fill="#b6aba9"/><path d="M4 11.500C1 11.500 0 9 2 7.500s4-2.500 7-4c3 .2 4 1.500 4.500 2.500 4 .5 4 5.500.5 5.500z" fill="#fff"/></svg>
    <svg class="me-3" width="17" height="17" viewBox="0 0 17 17"><g fill="none" stroke="#fff" stroke-width="1.200"><path d="M1.500 8C2 1.500 11-1 14.500 5M15 1v4.500h-4.500M7 15.500c-2 0-3.500-1-4.500-2.500M2 16.500v-4h4"/></g><circle cx="12.500" cy="12.500" r="4" fill="#ff9a0a"/></svg>
    <div class="text-center me-3">ENG<br>IN</div>
    <svg class="ms-1 me-2" width="17" height="13" viewBox="0 0 17 13" fill="none" stroke="#fff" stroke-width="1.200"><path d="M1 5c4.500-5 10.500-5 15 0M3 7.200c3.500-3.700 7.500-3.700 11 0M5.300 9.500c2-2.200 4.400-2.200 6.400 0"/><circle cx="8.500" cy="11.300" r="1" fill="#fff"/></svg>
    <svg class="me-2" width="16" height="14" viewBox="0 0 16 14" fill="none" stroke="#fff" stroke-width="1.200"><path d="M1 4.700h2.500L7 1.500v11L3.500 9.300H1zM9 5c1 1.200 1 2.800 0 4"/><path d="M11 3.300c2 2.200 2 5.200 0 7.400M13 1.500c3 3.400 3 7.600 0 11" stroke="#87736f"/></svg>
    <svg class="me-3" width="17" height="11" viewBox="0 0 17 11"><rect x=".7" y=".7" width="13.600" height="9.600" rx="2" fill="none" stroke="#fff" stroke-width="1.300"/><path d="M2.500 2.500h8v6h-8zM15 3.500h1.500v4H15z" fill="#fff"/></svg>
    <div class="clock text-end">11:23<br>17-03-2023</div>
    <div class="num3">3</div>
  </div>
</div>

<script src="https://cdn.jsdelivr.net/npm/bootstrap@5.3.0/dist/js/bootstrap.bundle.min.js"></script>
</body>
</html>
